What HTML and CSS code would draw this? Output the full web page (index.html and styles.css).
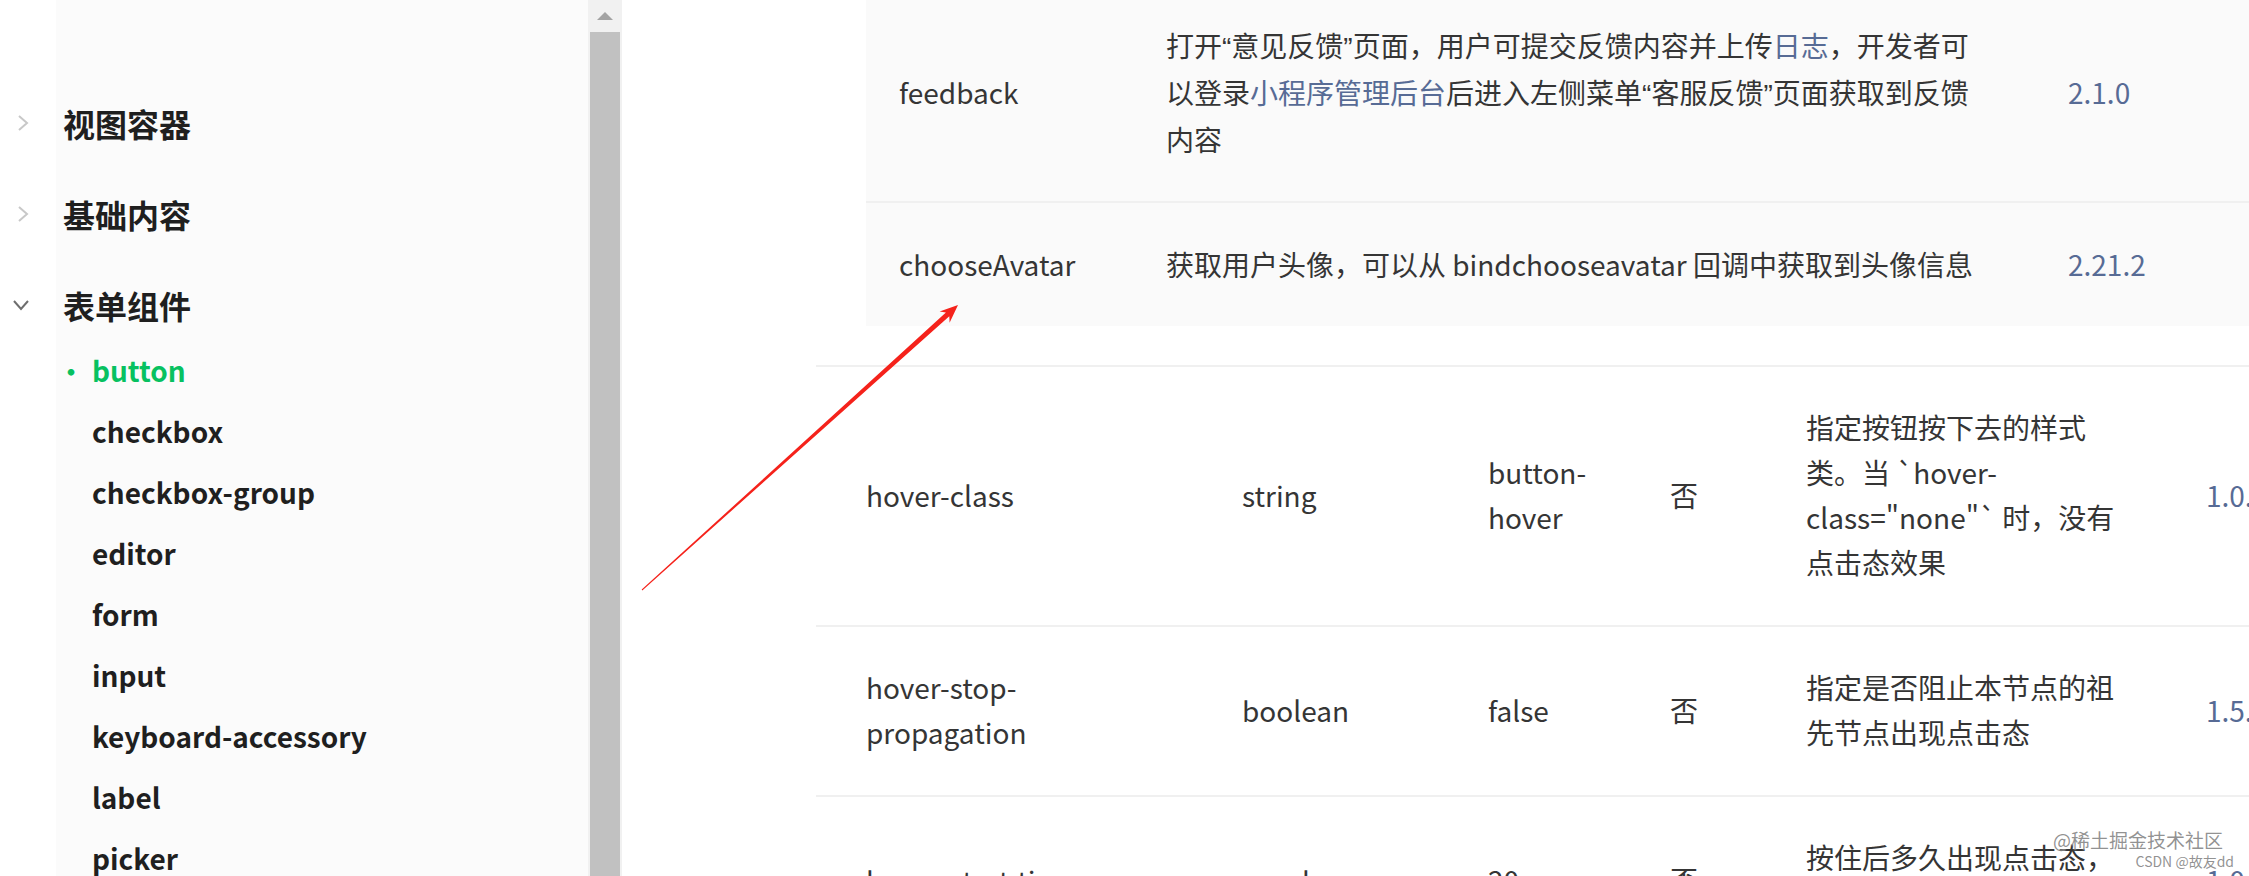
FILE: index.html
```html
<!DOCTYPE html>
<html lang="zh-CN">
<head>
    <meta charset="UTF-8">
    <meta name="viewport" content="width=device-width, initial-scale=1.0">
    <title>button | 表单组件</title>
    <link rel="stylesheet" href="styles.css">
</head>
<body>
    <div class="page">
        <aside class="sidebar">
            <div class="group">
                <div class="group-title">
                    <span class="chevron">
                        <svg width="12" height="18" viewBox="0 0 12 18"><path d="M2 2 L10 9 L2 16" fill="none" stroke="#c8c8c8" stroke-width="2"/></svg>
                    </span>
                    视图容器
                </div>
            </div>
            <div class="group">
                <div class="group-title">
                    <span class="chevron">
                        <svg width="12" height="18" viewBox="0 0 12 18"><path d="M2 2 L10 9 L2 16" fill="none" stroke="#c8c8c8" stroke-width="2"/></svg>
                    </span>
                    基础内容
                </div>
            </div>
            <div class="group open">
                <div class="group-title">
                    <span class="chevron">
                        <svg width="18" height="12" viewBox="0 0 18 12"><path d="M2 2 L9 10 L16 2" fill="none" stroke="#6e6e6e" stroke-width="2"/></svg>
                    </span>
                    表单组件
                </div>
                <ul class="items">
                    <li class="active">button</li>
                    <li>checkbox</li>
                    <li>checkbox-group</li>
                    <li>editor</li>
                    <li>form</li>
                    <li>input</li>
                    <li>keyboard-accessory</li>
                    <li>label</li>
                    <li>picker</li>
                </ul>
            </div>
        </aside>

        <div class="scrollbar">
            <div class="scroll-up"><span class="triangle"></span></div>
            <div class="scroll-thumb"></div>
        </div>

        <main class="content">
            <!-- open-type 合法值 -->
            <div class="sub-table">
                <div class="sub-row">
                    <div class="cell">feedback</div>
                    <div class="cell desc">打开<span class="q">“</span>意见反馈<span class="q">”</span>页面，用户可提交反馈内容并上传<a href="#">日志</a>，开发者可以登录<a href="#">小程序管理后台</a>后进入左侧菜单<span class="q">“</span>客服反馈<span class="q">”</span>页面获取到反馈内容</div>
                    <div class="cell ver">2.1.0</div>
                </div>
                <div class="sub-row">
                    <div class="cell">chooseAvatar</div>
                    <div class="cell desc">获取用户头像，可以从 bindchooseavatar 回调中获取到头像信息</div>
                    <div class="cell ver">2.21.2</div>
                </div>
            </div>

            <div class="attr-table">
                <div class="attr-row">
                    <div class="cell name">hover-class</div>
                    <div class="cell">string</div>
                    <div class="cell default">button-hover</div>
                    <div class="cell">否</div>
                    <div class="cell desc">指定按钮按下去的样式类。当 `hover-class="none"` 时，没有点击态效果</div>
                    <div class="cell ver">1.0.0</div>
                </div>
                <div class="attr-row">
                    <div class="cell name">hover-stop-propagation</div>
                    <div class="cell">boolean</div>
                    <div class="cell default">false</div>
                    <div class="cell">否</div>
                    <div class="cell desc">指定是否阻止本节点的祖先节点出现点击态</div>
                    <div class="cell ver">1.5.0</div>
                </div>
                <div class="attr-row">
                    <div class="cell name">hover-start-time</div>
                    <div class="cell">number</div>
                    <div class="cell default">20</div>
                    <div class="cell">否</div>
                    <div class="cell desc">按住后多久出现点击态，单位毫秒</div>
                    <div class="cell ver">1.0.0</div>
                </div>
            </div>
        </main>
    </div>

    <!-- 截图标注 -->
    <svg class="arrow" width="2249" height="876" viewBox="0 0 2249 876">
        <polygon points="641.7,589.6 945.9,312.5 939.6,311.5 958,305 949.6,322.7 949.3,316.3 642.3,590.4" fill="#f5221b"/>
    </svg>

    <div class="watermark">
        <div class="wm-main">@稀土掘金技术社区</div>
        <div class="wm-sub">CSDN @故友dd</div>
    </div>
</body>
</html>
```

FILE: styles.css
```css
body {
    margin: 0;
    padding: 0;
    width: 2249px;
    height: 876px;
    overflow: hidden;
    position: relative;
    font-family: "Noto Sans CJK SC", sans-serif;
    color: #353535;
    background: #fff;
}
.page {
    display: flex;
    height: 876px;
}

/* 左侧菜单 */
.sidebar {
    width: 588px;
    flex: none;
    padding-top: 67px;
    box-sizing: border-box;
    background: linear-gradient(to right, #fff 56px, #fbfbfb 56px);
}
.group-title {
    display: flex;
    align-items: center;
    height: 71px;
    margin-top: 20px;
    font-size: 32px;
    font-weight: bold;
    color: #1f1f1f;
}
.chevron {
    display: flex;
    align-items: center;
    width: 63px;
    padding-left: 17px;
    box-sizing: border-box;
}
.group.open .chevron {
    padding-left: 12px;
}
.items {
    list-style: none;
    margin: 0;
    padding: 0;
}
.items li {
    height: 61px;
    line-height: 61px;
    padding-left: 92px;
    font-size: 28px;
    font-weight: bold;
    color: #1f1f1f;
}
.items li.active {
    color: #07c160;
}
.items li.active::before {
    content: "•";
    display: inline-block;
    width: 34px;
    margin-left: -34px;
    font-size: 26px;
}

/* 滚动条 */
.scrollbar {
    width: 34px;
    flex: none;
    display: flex;
    flex-direction: column;
    align-items: center;
    background: #f1f1f1;
}
.scroll-up {
    height: 32px;
    display: flex;
    align-items: center;
    justify-content: center;
}
.triangle {
    width: 0;
    height: 0;
    border-left: 8px solid transparent;
    border-right: 8px solid transparent;
    border-bottom: 8px solid #a3a3a3;
}
.scroll-thumb {
    flex: 1;
    width: 30px;
    background: #c1c1c1;
}

/* 内容 */
.content {
    flex: 1;
    padding-left: 194px;
    font-size: 28px;
    line-height: 45px;
}
.content a {
    color: #576b95;
    text-decoration: none;
}
.q {
    font-family: "Liberation Sans", sans-serif;
}
.cell {
    padding: 39px 0;
}
.ver {
    color: #576b95;
    white-space: nowrap;
}

.sub-table {
    margin-top: -16px;
    margin-left: 50px;
    background: #fafafa;
}
.sub-row {
    display: grid;
    grid-template-columns: 267px 902px minmax(0, 1fr);
    align-items: center;
}
.sub-row + .sub-row {
    border-top: 2px solid #f0f0f0;
}
.sub-row .cell {
    padding-left: 33px;
}
.sub-row .desc {
    padding-right: 54px;
}

.attr-table {
    margin-top: 39px;
}
.attr-row {
    display: grid;
    grid-template-columns: 426px 246px 182px 136px 400px minmax(0, 1fr);
    align-items: center;
    border-top: 2px solid #f0f0f0;
}
.attr-row .cell {
    padding: 38px 0 40px;
}
.attr-row .name {
    padding-left: 50px;
    padding-right: 96px;
}
.attr-row .default {
    padding-right: 50px;
}
.attr-row .desc {
    padding-right: 80px;
}

/* 标注和水印 */
.arrow {
    position: absolute;
    left: 0;
    top: 0;
    pointer-events: none;
}
.watermark {
    position: absolute;
    right: 15px;
    top: 828px;
    text-align: right;
    color: rgba(110, 110, 110, 0.75);
    text-shadow: 0 0 2px #fff;
}
.wm-main {
    font-size: 19px;
    line-height: 24px;
    margin-right: 11px;
}
.wm-sub {
    font-size: 14px;
    line-height: 18px;
}
```
